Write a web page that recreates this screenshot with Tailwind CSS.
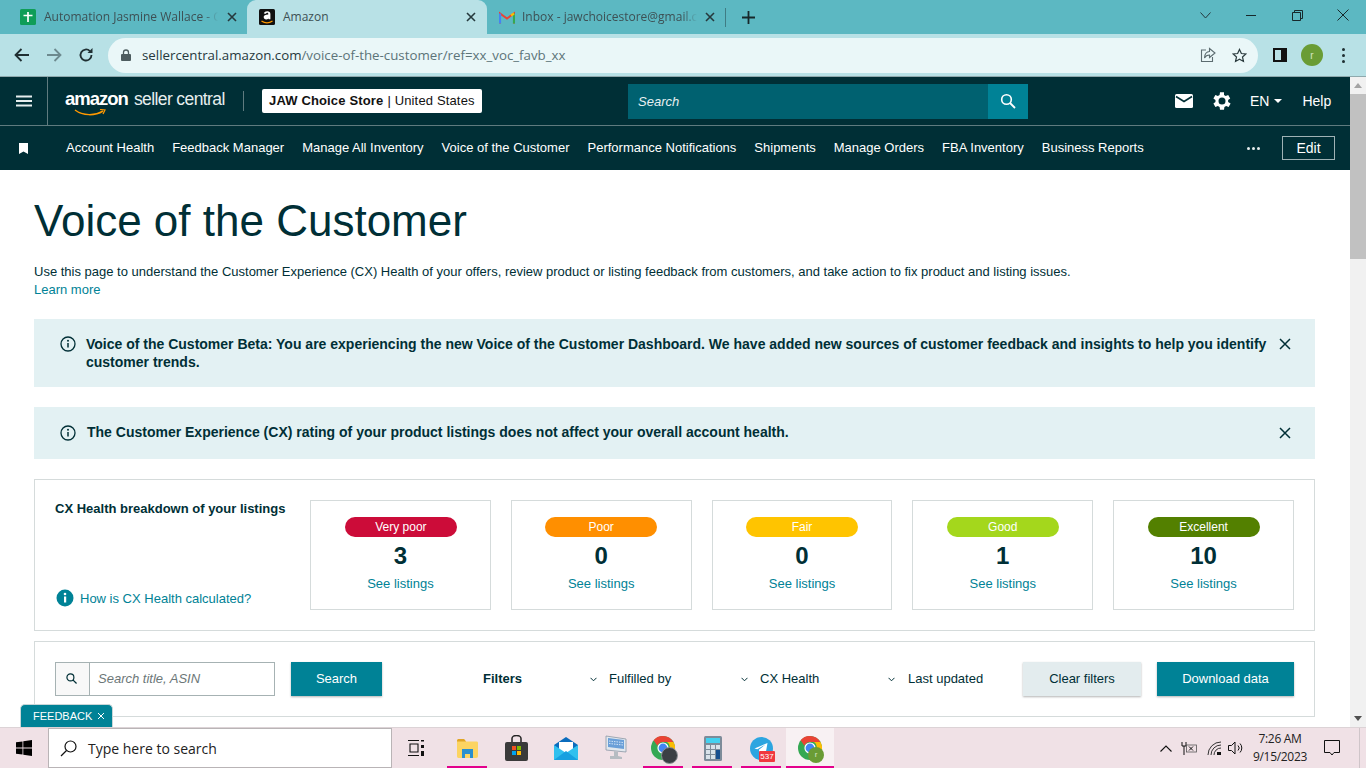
<!DOCTYPE html>
<html lang="en">
<head>
    <meta charset="UTF-8">
    <title>Amazon</title>
    <script src="https://cdn.jsdelivr.net/npm/@tailwindcss/browser@4"></script>
</head>
<body class="h-screen overflow-hidden flex flex-col font-['Liberation_Sans',Arial,sans-serif] text-[#002f36] bg-white">

    <!-- browser tabs -->
    <div class="h-[34px] shrink-0 bg-[#5cb8c2] flex items-stretch relative">
        <div class="w-[247px] pl-[20px] pr-[10px] flex items-center font-['Open_Sans',sans-serif] text-[12px] text-[#3d5054]">
            <svg class="w-[16px] h-[16px] shrink-0 mr-[8px]" viewBox="0 0 16 16"><rect width="16" height="16" rx="1.500" fill="#0f9d58"/><path d="M8 3v10M3.500 6.500h9" stroke="#fff" stroke-width="1.700"/></svg>
            <span class="flex-1 whitespace-nowrap overflow-hidden [mask-image:linear-gradient(to_right,black_92%,transparent)]">Automation Jasmine Wallace - Google</span>
            <svg class="w-[10px] h-[10px] shrink-0 ml-[9px]" viewBox="0 0 10 10"><path d="M1 1l8 8M9 1l-8 8" stroke="#26393d" stroke-width="1.600"/></svg>
        </div>
        <div class="w-[240px] bg-[#b8e1e6] rounded-t-[9px] pl-[12px] pr-[11px] flex items-center font-['Open_Sans',sans-serif] text-[12px] text-[#3d5054]">
            <svg class="w-[16px] h-[16px] shrink-0 mr-[8px]" viewBox="0 0 16 16"><rect width="16" height="16" rx="1.500" fill="#111"/><path d="M4.800 4.600C5.300 3 6.600 2.200 8.200 2.200c2.100 0 3.200 1 3.200 2.800v5.200H9.600l-.1-.8c-.6.700-1.400 1-2.300 1-1.500 0-2.500-.9-2.500-2.300 0-1.800 1.600-2.600 4.600-2.700V5c0-.8-.4-1.200-1.100-1.200-.6 0-1.100.3-1.300 1z" fill="#fff"/><path d="M2.500 12c3.500 2.400 7.500 2.400 11 0" stroke="#f90" stroke-width="1.300" fill="none"/></svg>
            <span class="flex-1">Amazon</span>
            <svg class="w-[10px] h-[10px] shrink-0" viewBox="0 0 10 10"><path d="M1 1l8 8M9 1l-8 8" stroke="#26393d" stroke-width="1.600"/></svg>
        </div>
        <div class="w-[239px] pl-[12px] pr-[11px] flex items-center font-['Open_Sans',sans-serif] text-[12px] text-[#3d5054] relative">
            <svg class="w-[16px] h-[13px] shrink-0 mr-[7px]" viewBox="0 0 16 12"><path d="M1 12V2l7 5 7-5v10" fill="none" stroke="#ea4335" stroke-width="2"/><path d="M1 12V2" stroke="#4285f4" stroke-width="2.200"/><path d="M15 12V2" stroke="#34a853" stroke-width="2.200"/><path d="M12 4l3-2" stroke="#fbbc04" stroke-width="2.200"/></svg>
            <span class="flex-1 whitespace-nowrap overflow-hidden [mask-image:linear-gradient(to_right,black_92%,transparent)]">Inbox - jawchoicestore@gmail.com</span>
            <svg class="w-[10px] h-[10px] shrink-0 ml-[8px]" viewBox="0 0 10 10"><path d="M1 1l8 8M9 1l-8 8" stroke="#26393d" stroke-width="1.600"/></svg>
            <span class="absolute right-0 top-[8px] h-[19px] w-px bg-[#3f7c84]"></span>
        </div>
        <div class="w-[44px] flex items-center justify-center">
            <svg class="w-[13px] h-[13px]" viewBox="0 0 13 13"><path d="M6.500 0v13M0 6.500h13" stroke="#17282b" stroke-width="1.800"/></svg>
        </div>
        <div class="ml-auto flex items-start">
            <div class="w-[46px] h-[30px] flex items-center justify-center"><svg class="w-[11px] h-[7px]" viewBox="0 0 11 7"><path d="M.500.500l5 5.500 5-5.500" fill="none" stroke="#26393d"/></svg></div>
            <div class="w-[46px] h-[30px] flex items-center justify-center"><span class="w-[10px] h-px bg-[#17282b]"></span></div>
            <div class="w-[46px] h-[30px] flex items-center justify-center"><svg class="w-[11px] h-[11px]" viewBox="0 0 11 11"><path d="M.500 2.500h8v8h-8zM2.500 2.500v-2h8v8h-2" fill="none" stroke="#17282b"/></svg></div>
            <div class="w-[46px] h-[30px] flex items-center justify-center"><svg class="w-[12px] h-[12px]" viewBox="0 0 12 12"><path d="M.500.500l11 11M11.500.500l-11 11" stroke="#17282b"/></svg></div>
        </div>
    </div>

    <!-- browser toolbar -->
    <div class="h-[43px] shrink-0 bg-[#b8e1e6] border-b border-[#8fa9ad] flex items-center">
        <div class="w-[108px] flex items-center pl-[14px] gap-[16px] shrink-0">
            <svg class="w-[16px] h-[14px]" viewBox="0 0 16 14"><path d="M15 7H2M7.500 1L1.500 7l6 6" fill="none" stroke="#1f2f32" stroke-width="1.800"/></svg>
            <svg class="w-[16px] h-[14px]" viewBox="0 0 16 14"><path d="M1 7h13M8.500 1l6 6-6 6" fill="none" stroke="#6d8a8f" stroke-width="1.800"/></svg>
            <svg class="w-[16px] h-[16px]" viewBox="0 0 16 16"><path d="M13.500 8a5.500 5.500 0 1 1-1.600-3.900" fill="none" stroke="#1f2f32" stroke-width="1.800"/><path d="M14.500 1v5h-5z" fill="#1f2f32"/></svg>
        </div>
        <div class="w-[1150px] h-[35px] bg-[#eaf7f8] rounded-full flex items-center pl-[13px] pr-[11px] text-[13.300px] font-['Open_Sans',sans-serif] shrink-0">
            <svg class="w-[10px] h-[12px] mr-[11px] shrink-0" viewBox="0 0 10 12"><rect y="5" width="10" height="7" rx="1" fill="#4d5c5f"/><path d="M2.500 5.500V3.500a2.500 2.500 0 0 1 5 0v2" fill="none" stroke="#4d5c5f" stroke-width="1.300"/></svg>
            <span class="text-[#26393d] mt-[1px]">sellercentral.amazon.com<span class="text-[#5c7478]">/voice-of-the-customer/ref=xx_voc_favb_xx</span></span>
            <svg class="w-[16px] h-[16px] ml-auto mr-[16px]" viewBox="0 0 16 16"><path d="M6 3H1.500v11.500h11V10" fill="none" stroke="#5c6c70" stroke-width="1.100"/><path d="M9.500 1.500L15 6l-5.500 4.500V8C7 8 5.500 9 4.500 11c0-4 2-6.500 5-6.500z" fill="none" stroke="#5c6c70" stroke-width="1.100"/></svg>
            <svg class="w-[15px] h-[15px]" viewBox="0 0 16 16"><path d="M8 1.500l2 4.400 4.800.5-3.600 3.200 1 4.700L8 11.900l-4.200 2.400 1-4.700L1.200 6.400 6 5.900z" fill="none" stroke="#2b3b3e" stroke-width="1.300"/></svg>
        </div>
        <svg class="w-[14px] h-[14px] ml-[15px] shrink-0" viewBox="0 0 14 14"><rect x="1" y="1" width="12" height="12" fill="none" stroke="#111" stroke-width="2"/><rect x="8" y="1" width="5" height="12" fill="#111"/></svg>
        <div class="w-[22px] h-[22px] ml-[14px] rounded-full bg-[#6a9c35] text-[#d5e5c5] text-[10px] flex items-center justify-center shrink-0">r</div>
        <div class="ml-[19px] flex flex-col gap-[3px] shrink-0">
            <span class="w-[3px] h-[3px] rounded-full bg-[#1f2f32]"></span>
            <span class="w-[3px] h-[3px] rounded-full bg-[#1f2f32]"></span>
            <span class="w-[3px] h-[3px] rounded-full bg-[#1f2f32]"></span>
        </div>
    </div>

    <!-- page + scrollbar -->
    <div class="flex-1 min-h-0 flex relative">
        <div class="flex-1 min-w-0 overflow-hidden">

            <!-- seller central header -->
            <div class="h-[49px] bg-[#002f36] border-b border-[#5f7b7f] flex items-center text-white">
                <div class="w-[48px] h-full border-r border-[#5f7b7f] flex items-center justify-center shrink-0">
                    <svg class="w-[16px] h-[12px]" viewBox="0 0 16 12"><path d="M0 1.500h16M0 6h16M0 10.500h16" stroke="#e6eeee" stroke-width="2"/></svg>
                </div>
                <div class="w-[161px] ml-[17px] relative shrink-0 leading-none whitespace-nowrap -mt-[4px] flex items-baseline gap-[6px]">
                    <span class="font-bold text-[18.500px] tracking-[-1px]">amazon</span>
                    <span class="text-[17.500px] tracking-[-0.6px] text-[#e6eeee]">seller central</span>
                    <svg class="absolute left-[9px] top-[19px] w-[32px] h-[8px]" viewBox="0 0 32 8"><path d="M1 1c8 6 20 6 28 1" fill="none" stroke="#f90" stroke-width="1.500"/><path d="M26 .500l5 .500-2 4" fill="none" stroke="#f90" stroke-width="1.200"/></svg>
                </div>
                <span class="w-px h-[20px] bg-[#5f7b7f] ml-[17px] shrink-0"></span>
                <div class="w-[220px] h-[24px] ml-[18px] px-[7px] bg-white rounded-[2px] flex items-center text-[13px] text-[#111] whitespace-nowrap shrink-0 tracking-[0.15px]">
                    <span class="font-bold">JAW Choice Store</span><span class="ml-[4px]">| United States</span>
                </div>
                <div class="w-[400px] h-[35px] ml-[146px] bg-[#006170] flex items-stretch shrink-0">
                    <div class="flex-1 pl-[10px] pt-[1px] flex items-center italic text-[13px] text-[#e8f0f1]">Search</div>
                    <div class="w-[40px] bg-[#008296] flex items-center justify-center">
                        <svg class="w-[16px] h-[16px]" viewBox="0 0 16 16"><circle cx="6.500" cy="6.500" r="4.800" fill="none" stroke="#fff" stroke-width="1.600"/><path d="M10 10l5 5" stroke="#fff" stroke-width="1.800"/></svg>
                    </div>
                </div>
                <svg class="w-[18px] h-[14px] ml-[147px] shrink-0" viewBox="0 0 18 14"><rect width="18" height="14" rx="1.500" fill="#fff"/><path d="M1 2.500l8 5 8-5" fill="none" stroke="#002f36" stroke-width="1.600"/></svg>
                <svg class="w-[24px] h-[24px] ml-[17px] shrink-0" viewBox="0 0 24 24"><path fill="#fff" d="M19.400 13a7.600 7.600 0 0 0 0-2l2.100-1.600-2-3.500-2.500 1a7.400 7.400 0 0 0-1.700-1L15.300 3.200h-4l-.4 2.700a7.400 7.400 0 0 0-1.700 1l-2.500-1-2 3.500L6.800 11a7.600 7.600 0 0 0 0 2l-2.100 1.600 2 3.500 2.500-1a7.400 7.400 0 0 0 1.700 1l.4 2.700h4l.4-2.700a7.400 7.400 0 0 0 1.700-1l2.500 1 2-3.500zM13.300 15.500a3.500 3.500 0 1 1 0-7 3.500 3.500 0 0 1 0 7z" transform="translate(-1.300 0)"/></svg>
                <span class="ml-[16px] text-[14px] shrink-0">EN</span>
                <span class="ml-[5px] w-0 h-0 border-x-[4px] border-x-transparent border-t-[4px] border-t-white shrink-0"></span>
                <span class="ml-[20px] text-[14px] shrink-0">Help</span>
            </div>

            <!-- favourites bar -->
            <div class="h-[44px] bg-[#002f36] flex items-center text-white text-[13px] whitespace-nowrap">
                <svg class="w-[9px] h-[11px] ml-[19px] mr-[38px] shrink-0" viewBox="0 0 9 11"><path d="M0 0h9v11L4.500 8.500 0 11z" fill="#fff"/></svg>
                <div class="flex items-center gap-[18px]">
                    <span>Account Health</span>
                    <span>Feedback Manager</span>
                    <span>Manage All Inventory</span>
                    <span>Voice of the Customer</span>
                    <span>Performance Notifications</span>
                    <span>Shipments</span>
                    <span>Manage Orders</span>
                    <span>FBA Inventory</span>
                    <span>Business Reports</span>
                </div>
                <div class="ml-auto flex items-center">
                    <div class="flex gap-[2px] mr-[22px]">
                        <span class="w-[3px] h-[3px] rounded-full bg-[#e6eeee]"></span>
                        <span class="w-[3px] h-[3px] rounded-full bg-[#e6eeee]"></span>
                        <span class="w-[3px] h-[3px] rounded-full bg-[#e6eeee]"></span>
                    </div>
                    <div class="w-[53px] h-[24px] mr-[15px] border border-[#9fb2b5] flex items-center justify-center text-[14px]">Edit</div>
                </div>
            </div>

            <!-- content -->
            <div class="pl-[34px] pr-[35px]">
                <h1 class="mt-[25px] text-[44px] leading-[52px] text-[#002f36]">Voice of the Customer</h1>
                <p class="mt-[16px] text-[13px] leading-[18px] text-[#002f36]">Use this page to understand the Customer Experience (CX) Health of your offers, review product or listing feedback from customers, and take action to fix product and listing issues.</p>
                <a class="block text-[13px] leading-[18px] text-[#008296]">Learn more</a>

                <div class="mt-[20px] h-[68px] bg-[#e3f1f3] flex pl-[26px] pr-[24px] pt-[16px]">
                    <svg class="w-[16px] h-[16px] mr-[10px] shrink-0 mt-[1px]" viewBox="0 0 16 16"><circle cx="8" cy="8" r="7" fill="none" stroke="#002f36" stroke-width="1.300"/><path d="M8 7v4.500" stroke="#002f36" stroke-width="1.500"/><circle cx="8" cy="4.800" r="1" fill="#002f36"/></svg>
                    <p class="w-[1190px] text-[14px] leading-[18px] font-bold">Voice of the Customer Beta: You are experiencing the new Voice of the Customer Dashboard. We have added new sources of customer feedback and insights to help you identify customer trends.</p>
                    <svg class="w-[12px] h-[12px] ml-auto mt-[3px] shrink-0" viewBox="0 0 12 12"><path d="M1 1l10 10M11 1L1 11" stroke="#002f36" stroke-width="1.500"/></svg>
                </div>
                <div class="mt-[20px] h-[52px] bg-[#e3f1f3] flex items-center pl-[26px] pr-[24px]">
                    <svg class="w-[16px] h-[16px] mr-[11px] shrink-0" viewBox="0 0 16 16"><circle cx="8" cy="8" r="7" fill="none" stroke="#002f36" stroke-width="1.300"/><path d="M8 7v4.500" stroke="#002f36" stroke-width="1.500"/><circle cx="8" cy="4.800" r="1" fill="#002f36"/></svg>
                    <p class="text-[14px] font-bold -mt-[1px]">The Customer Experience (CX) rating of your product listings does not affect your overall account health.</p>
                    <svg class="w-[12px] h-[12px] ml-auto -mt-[1px] shrink-0" viewBox="0 0 12 12"><path d="M1 1l10 10M11 1L1 11" stroke="#002f36" stroke-width="1.500"/></svg>
                </div>

                <!-- CX health -->
                <div class="mt-[20px] h-[152px] border border-[#d5dbdb] flex px-[20px] pt-[20px]">
                    <div class="w-[255px] h-[110px] shrink-0 flex flex-col justify-between">
                        <div class="text-[13px] font-bold leading-[18px]">CX Health breakdown of your listings</div>
                        <div class="flex items-center gap-[6px] text-[13px] text-[#008296] mb-[2px] ml-[1px]">
                            <svg class="w-[18px] h-[18px]" viewBox="0 0 18 18"><circle cx="9" cy="9" r="8.500" fill="#008296"/><rect x="8" y="7.500" width="2.200" height="6" fill="#fff"/><circle cx="9" cy="5" r="1.300" fill="#fff"/></svg>
                            <span>How is CX Health calculated?</span>
                        </div>
                    </div>
                    <div class="flex-1 grid grid-cols-5 gap-[20px] h-[110px]">
                        <div class="border border-[#d5dbdb] flex flex-col items-center pt-[16px]">
                            <div class="w-[112px] h-[20px] ml-[1px] rounded-full bg-[#cc0c39] text-white text-[12px] leading-[20px] text-center">Very poor</div>
                            <div class="text-[24px] leading-[28px] font-bold mt-[5px]">3</div>
                            <div class="text-[13px] text-[#008296] leading-[18px] mt-[5px]">See listings</div>
                        </div>
                        <div class="border border-[#d5dbdb] flex flex-col items-center pt-[16px]">
                            <div class="w-[112px] h-[20px] rounded-full bg-[#ff8f00] text-white text-[12px] leading-[20px] text-center">Poor</div>
                            <div class="text-[24px] leading-[28px] font-bold mt-[5px]">0</div>
                            <div class="text-[13px] text-[#008296] leading-[18px] mt-[5px]">See listings</div>
                        </div>
                        <div class="border border-[#d5dbdb] flex flex-col items-center pt-[16px]">
                            <div class="w-[112px] h-[20px] rounded-full bg-[#ffc400] text-white text-[12px] leading-[20px] text-center">Fair</div>
                            <div class="text-[24px] leading-[28px] font-bold mt-[5px]">0</div>
                            <div class="text-[13px] text-[#008296] leading-[18px] mt-[5px]">See listings</div>
                        </div>
                        <div class="border border-[#d5dbdb] flex flex-col items-center pt-[16px]">
                            <div class="w-[112px] h-[20px] rounded-full bg-[#a4d71c] text-white text-[12px] leading-[20px] text-center">Good</div>
                            <div class="text-[24px] leading-[28px] font-bold mt-[5px]">1</div>
                            <div class="text-[13px] text-[#008296] leading-[18px] mt-[5px]">See listings</div>
                        </div>
                        <div class="border border-[#d5dbdb] flex flex-col items-center pt-[16px]">
                            <div class="w-[112px] h-[20px] rounded-full bg-[#538000] text-white text-[12px] leading-[20px] text-center">Excellent</div>
                            <div class="text-[24px] leading-[28px] font-bold mt-[5px]">10</div>
                            <div class="text-[13px] text-[#008296] leading-[18px] mt-[5px]">See listings</div>
                        </div>
                    </div>
                </div>

                <!-- filters -->
                <div class="mt-[10px] h-[76px] border border-[#d5dbdb] flex items-center px-[20px] text-[13px] whitespace-nowrap">
                    <div class="w-[220px] h-[34px] border border-[#a6b2b3] flex shrink-0">
                        <div class="w-[34px] bg-[#f8f8f8] border-r border-[#a6b2b3] flex items-center justify-center">
                            <svg class="w-[11px] h-[11px] -ml-[2px] -mt-[2px]" viewBox="0 0 12 12"><circle cx="4.800" cy="4.800" r="3.800" fill="none" stroke="#002f36" stroke-width="1.300"/><path d="M7.500 7.500l4 4" stroke="#002f36" stroke-width="1.400"/></svg>
                        </div>
                        <div class="flex-1 pl-[8px] flex items-center italic text-[#6c7778]">Search title, ASIN</div>
                    </div>
                    <div class="w-[91px] h-[34px] ml-[16px] bg-[#008296] text-white flex items-center justify-center shadow-[0_1px_2px_rgba(0,0,0,0.3)] shrink-0">Search</div>
                    <span class="ml-[101px] font-bold w-[39px]">Filters</span>
                    <svg class="w-[7px] h-[5px] ml-[68px]" viewBox="0 0 7 5"><path d="M.500.800l3 3 3-3" fill="none" stroke="#002f36"/></svg>
                    <span class="ml-[12px] w-[63px]">Fulfilled by</span>
                    <svg class="w-[7px] h-[5px] ml-[69px]" viewBox="0 0 7 5"><path d="M.500.800l3 3 3-3" fill="none" stroke="#002f36"/></svg>
                    <span class="ml-[12px] w-[60px]">CX Health</span>
                    <svg class="w-[7px] h-[5px] ml-[68px]" viewBox="0 0 7 5"><path d="M.500.800l3 3 3-3" fill="none" stroke="#002f36"/></svg>
                    <span class="ml-[13px]">Last updated</span>
                    <div class="w-[118px] h-[34px] ml-auto bg-[#e3ecee] flex items-center justify-center shadow-[0_1px_2px_rgba(0,0,0,0.3)] shrink-0">Clear filters</div>
                    <div class="w-[137px] h-[34px] ml-[16px] bg-[#008296] text-white flex items-center justify-center shadow-[0_1px_2px_rgba(0,0,0,0.3)] shrink-0">Download data</div>
                </div>
                <div class="mt-[10px] h-[20px] border border-[#d5dbdb]"></div>
            </div>
        </div>

        <!-- scrollbar -->
        <div class="w-[16px] shrink-0 bg-[#f1f1f1] relative">
            <span class="absolute top-[6px] left-[4px] w-0 h-0 border-x-[4px] border-x-transparent border-b-[5px] border-b-[#a3a3a3]"></span>
            <div class="absolute top-[17px] left-0 w-[16px] h-[165px] bg-[#c1c1c1]"></div>
            <span class="absolute bottom-[6px] left-[4px] w-0 h-0 border-x-[4px] border-x-transparent border-t-[5px] border-t-[#505050]"></span>
        </div>

        <!-- feedback tab -->
        <div class="absolute left-[20px] bottom-0 w-[93px] h-[23px] bg-[#008296] border border-[#c9d6d8] border-b-0 rounded-t-[5px] text-white text-[11px] flex items-center pl-[12px] gap-[5px]">
            <span>FEEDBACK</span>
            <svg class="w-[8px] h-[8px]" viewBox="0 0 8 8"><path d="M1 1l6 6M7 1L1 7" stroke="#fff"/></svg>
        </div>
    </div>

    <!-- windows taskbar -->
    <div class="h-[41px] shrink-0 bg-[#f0e1e6] border-t border-[#dcd3d6] flex items-stretch">
        <div class="w-[48px] flex items-center justify-center shrink-0">
            <svg class="w-[16px] h-[16px]" viewBox="0 0 16 16"><path d="M0 2.300l6.500-.9v6.200H0zM7.300 1.300L16 0v7.600H7.300zM0 8.400h6.500v6.200L0 13.700zM7.300 8.400H16V16l-8.700-1.300z" fill="#000"/></svg>
        </div>
        <div class="w-[344px] bg-white border border-[#b9b4b6] flex items-center pl-[11px] text-[14px] text-[#222] font-['Open_Sans',sans-serif] shrink-0">
            <svg class="w-[17px] h-[17px] mr-[11px] shrink-0" viewBox="0 0 17 17"><circle cx="10.500" cy="6.500" r="5.500" fill="none" stroke="#111" stroke-width="1.200"/><path d="M6.500 10.500L1 16" stroke="#111" stroke-width="1.300"/></svg>
            Type here to search
        </div>
        <div class="w-[51px] flex items-center justify-center shrink-0">
            <svg class="w-[17px] h-[16px] -ml-[3px]" viewBox="0 0 17 16"><path d="M0 .500h11M0 15.500h11M2 4h8v8H2z" fill="none" stroke="#111" stroke-width="1.100"/><rect x="13" y="0" width="3" height="1.500" fill="#111"/><rect x="13" y="5" width="3" height="3" fill="#111"/><rect x="13" y="11" width="3" height="5" fill="#111"/></svg>
        </div>
        <div class="w-[49px] flex items-center justify-center shrink-0 relative">
            <svg class="w-[21px] h-[19px]" viewBox="0 0 21 19"><path d="M0 2c0-1 .5-2 1.500-2H7l2 2.500h10.500c1 0 1.500.5 1.500 1.500v13c0 1-.5 2-2 2H1.500C.5 19 0 18 0 17z" fill="#fcd462"/><path d="M5 10h11v9h-3v-4H8v4H5z" fill="#2a8fcf"/><path d="M0 2c0-1 .5-2 1.500-2H7l2 2.500H0z" fill="#e0a526"/></svg>
            <span class="absolute left-[4px] bottom-0 w-[40px] h-[2px] bg-[#e3008c]"></span>
        </div>
        <div class="w-[49px] flex items-center justify-center shrink-0">
            <svg class="w-[23px] h-[26px]" viewBox="0 0 23 26"><path d="M7 8V3.500a4.500 3 0 0 1 9 0V8" fill="none" stroke="#222" stroke-width="1.500"/><rect y="7" width="23" height="19" rx="2" fill="#3a3a3a"/><rect x="7" y="11" width="4" height="4" fill="#f25022"/><rect x="12" y="11" width="4" height="4" fill="#7fba00"/><rect x="7" y="16" width="4" height="4" fill="#00a4ef"/><rect x="12" y="16" width="4" height="4" fill="#ffb900"/></svg>
        </div>
        <div class="w-[49px] flex items-center justify-center shrink-0">
            <svg class="w-[24px] h-[23px]" viewBox="0 0 24 23"><path d="M12 0l12 8v15H0V8z" fill="#0a6cbd"/><path d="M5 5h14v8l-7 4-7-4z" fill="#fff"/><path d="M0 8l12 8 12-8v15H0z" fill="#30c0ee"/><path d="M0 23l12-9 12 9z" fill="#16a0e0"/></svg>
        </div>
        <div class="w-[49px] flex items-center justify-center shrink-0">
            <svg class="w-[24px] h-[26px]" viewBox="0 0 24 26"><path d="M3 1l20 3v13L3 15z" fill="#e2e8ee" stroke="#8a97a4" stroke-width=".8"/><path d="M5 3l16 2v9L5 12z" fill="#6a9fd8"/><path d="M6 6l14 1.500M6 8.500l14 1.500" stroke="#d5e6f8" stroke-dasharray="1.500 1"/><path d="M11 16v5h-4v3h12v-2l-4-1v-4z" fill="#b6bcc2"/></svg>
        </div>
        <div class="w-[49px] flex items-center justify-center shrink-0 relative">
            <svg class="w-[24px] h-[24px] -ml-[2px]" viewBox="0 0 24 24"><circle cx="12" cy="12" r="12" fill="#34a853"/><path d="M12 0a12 12 0 0 1 10.400 6H12a6 6 0 0 0-5.600 3.800L2.600 4.200A12 12 0 0 1 12 0z" fill="#ea4335"/><path d="M22.400 6A12 12 0 0 1 12 24l5.200-9A6 6 0 0 0 16 6z" fill="#fbbc04"/><circle cx="12" cy="12" r="5" fill="#4285f4" stroke="#fff" stroke-width="1.200"/></svg>
            <span class="absolute left-[22px] top-[19px] w-[17px] h-[17px] rounded-full bg-[#3b3f44] border border-[#8d9196]"></span>
            <span class="absolute left-[4px] bottom-0 w-[40px] h-[2px] bg-[#e3008c]"></span>
        </div>
        <div class="w-[49px] flex items-center justify-center shrink-0 relative">
            <svg class="w-[18px] h-[25px]" viewBox="0 0 18 25"><rect width="18" height="25" rx="1.500" fill="#7d8b99"/><rect x="2" y="2" width="14" height="5" fill="#43d1f0"/><path d="M2 9h4v4H2zM7 9h4v4H7zM12 9h4v4h-4zM2 14h4v4H2zM7 14h4v4H7zM2 19h4v4H2zM7 19h4v4H7z" fill="#d9e2ea"/><rect x="12" y="14" width="4" height="9" fill="#174f8f"/></svg>
            <span class="absolute left-[4px] bottom-0 w-[40px] h-[2px] bg-[#e3008c]"></span>
        </div>
        <div class="w-[49px] flex items-center justify-center shrink-0 relative">
            <svg class="w-[23px] h-[23px]" viewBox="0 0 23 23"><circle cx="11.500" cy="11.500" r="11.500" fill="#2ca5e0"/><path d="M4.500 11.500L17.500 6l-2 11.500-4-3-2 2-.6-3.800 6.600-5.200-8.200 4.700z" fill="#fff"/></svg>
            <span class="absolute left-[22px] top-[23px] w-[16px] h-[11px] bg-[#f0383f] rounded-[1px] text-white text-[8px] leading-[11px] text-center">537</span>
            <span class="absolute left-[4px] bottom-0 w-[40px] h-[2px] bg-[#e3008c]"></span>
        </div>
        <div class="w-[48px] bg-[#f8f1f3] flex items-center justify-center shrink-0 relative">
            <svg class="w-[24px] h-[24px]" viewBox="0 0 24 24"><circle cx="12" cy="12" r="12" fill="#34a853"/><path d="M12 0a12 12 0 0 1 10.400 6H12a6 6 0 0 0-5.600 3.800L2.600 4.200A12 12 0 0 1 12 0z" fill="#ea4335"/><path d="M22.400 6A12 12 0 0 1 12 24l5.200-9A6 6 0 0 0 16 6z" fill="#fbbc04"/><circle cx="12" cy="12" r="5" fill="#4285f4" stroke="#fff" stroke-width="1.200"/></svg>
            <span class="absolute left-[22px] top-[19px] w-[16px] h-[16px] rounded-full bg-[#6a9c35] text-[#d5e5c5] text-[8px] leading-[16px] text-center">r</span>
            <span class="absolute left-0 bottom-0 w-full h-[2px] bg-[#e3008c]"></span>
        </div>
        <div class="ml-auto flex items-center shrink-0">
            <svg class="w-[12px] h-[7px] mr-[9px]" viewBox="0 0 12 7"><path d="M.500 6.500L6 1l5.500 5.500" fill="none" stroke="#111" stroke-width="1.100"/></svg>
            <svg class="w-[16px] h-[15px] mr-[10px]" viewBox="0 0 16 15"><path d="M1 1v4h4V1M3 5v9" fill="none" stroke="#111"/><rect x="5.500" y="4" width="10" height="7" fill="none" stroke="#555" stroke-width=".8"/><path d="M8 5.500l4 4M12 5.500l-4 4" stroke="#111"/></svg>
            <svg class="w-[15px] h-[15px] mr-[6px]" viewBox="0 0 15 15"><path d="M1 14a13 13 0 0 1 13-13M4 14A10 10 0 0 1 14 4M7 14a7 7 0 0 1 7-7" fill="none" stroke="#333"/><rect x="10" y="11" width="4" height="3" fill="#111"/></svg>
            <svg class="w-[16px] h-[14px] mr-[4px]" viewBox="0 0 16 14"><path d="M.500 4.500h3L7 1v12l-3.500-3.500h-3z" fill="none" stroke="#111"/><path d="M10 4.500a3.500 3.500 0 0 1 0 5M12 2.500a6.500 6.500 0 0 1 0 9" fill="none" stroke="#111"/></svg>
            <div class="w-[64px] text-center text-[12px] leading-[18px] text-[#222] font-['Open_Sans',sans-serif] tracking-[-0.3px]">
                <div>7:26 AM</div>
                <div>9/15/2023</div>
            </div>
            <div class="w-[40px] flex items-center justify-center">
                <svg class="w-[16px] h-[16px]" viewBox="0 0 16 16"><path d="M.500.500h15v12h-5.500L8 15l-2-2.500H.500z" fill="none" stroke="#111"/></svg>
            </div>
            <div class="w-[14px] h-full flex justify-center"><span class="w-px h-full bg-[#cfc5c9]"></span></div>
        </div>
    </div>
</body>
</html>
